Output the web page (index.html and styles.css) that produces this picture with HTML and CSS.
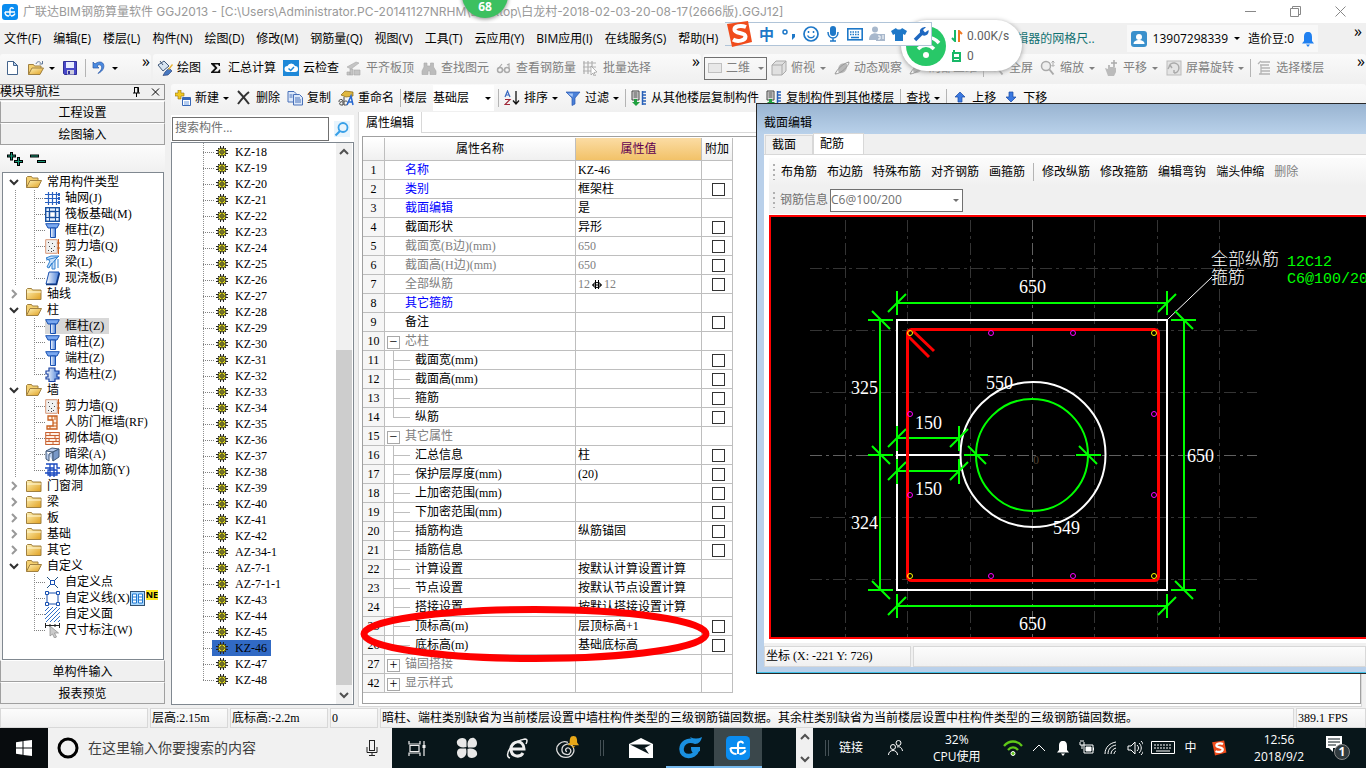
FILE: index.html
```html
<!DOCTYPE html>
<html lang="zh-CN">

<head>
    <meta charset="UTF-8">
    <meta name="viewport" content="width=device-width, initial-scale=1.0">
    <title>广联达BIM钢筋算量软件 GGJ2013</title>
    <link rel="stylesheet" href="styles.css">
</head>

<body>
    <!-- Icon sprite -->
    <svg class="sprite" aria-hidden="true">
        <defs>
            <linearGradient id="gold" x1="0" y1="0" x2="1" y2="1"><stop offset="0" stop-color="#fff3b8"/><stop offset="1" stop-color="#e0a020"/></linearGradient>
            <linearGradient id="blue" x1="0" y1="0" x2="1" y2="0"><stop offset="0" stop-color="#fff"/><stop offset="1" stop-color="#4a80d8"/></linearGradient>
        </defs>
        <symbol id="logo" viewBox="0 0 16 16"><rect width="16" height="16" rx="3" fill="#0a8cf0"/><path d="M8 12V5.500a1.800 1.800 0 0 1 3.500-.5M3 8h10M3 8c0 2.500 1.500 4 4 4M9 12c2 0 3.300-.8 4-2.500" fill="none" stroke="#fff" stroke-width="1.400"/></symbol>
        <symbol id="doc" viewBox="0 0 16 16"><path d="M3.500 1.500h6l4 4v9h-10z" fill="#fff" stroke="#44648c"/><path d="M9.500 1.500v4h4z" fill="#b8d0f0" stroke="#44648c"/></symbol>
        <symbol id="open" viewBox="0 0 16 16"><path d="M.5 13.500v-10l1-1h4l1 1.500h5.500v2.500" fill="#f4d070" stroke="#a08040"/><path d="M.5 13.500 4 6.500h11.500L12 13.500z" fill="url(#gold)" stroke="#a08040"/></symbol>
        <symbol id="load" viewBox="0 0 16 16"><path d="M.5 14.500v-10h5l1 1.500h6.500v2" fill="#f4d070" stroke="#a08040"/><path d="M.5 14.500 4 8h11.500L12 14.500z" fill="url(#gold)" stroke="#a08040"/><path d="M8 4c1-3 4-3 5-.5M14.500 1v3h-3" fill="none" stroke="#607898"/></symbol>
        <symbol id="folder" viewBox="0 0 16 16"><path d="M.5 13.500v-10l1-1h4l1 1.500h8.500v9.500z" fill="url(#gold)" stroke="#a08040"/><path d="M1 6h14" stroke="#fff8d8"/></symbol>
        <symbol id="save" viewBox="0 0 16 16"><path d="M1.500 1.500h13v13h-12l-1-1z" fill="#4848c8" stroke="#303098"/><path d="M4 2h8v6H4z" fill="#e8ecff"/><path d="M5 10h7v4.500H5z" fill="#ccd"/><path d="M6 11h2v3H6z" fill="#303098"/></symbol>
        <symbol id="undo" viewBox="0 0 16 16"><path d="M2 2v6h6L6 6c3-3 6 0 4 4l-3 3.500C15 10 14 2 9 2 7 2 5 3 4 4z" fill="#4a8ae0" stroke="#2858a8" stroke-width=".7"/></symbol>
        <symbol id="paint" viewBox="0 0 16 16"><path d="m1 5 6-4 5 5-6 5z" fill="#d8e4f0" stroke="#405878"/><path d="M3 1l3 4" stroke="#405878"/><path d="m8 12 4-4 3 3-4 4-5 .5z" fill="#4878c0" stroke="#203870" stroke-width=".6"/><path d="m11 9 4-5 1 1-4 5z" fill="#e8b030"/></symbol>
        <symbol id="sigma" viewBox="0 0 16 16"><path d="M3 3h9v3h-1l-1-1.500H6.500L9.500 8l-3.500 3.500h4l1.200-2h1V13H3v-1l4-4-4-4z" fill="#111"/></symbol>
        <symbol id="cloud" viewBox="0 0 16 16"><rect width="16" height="16" fill="#1e88d8"/><path d="M4.500 12a3 3 0 0 1 0-6 4 4 0 0 1 7.500 0 3 3 0 0 1 0 6z" fill="#fff"/><path d="m5.500 8.500 2.200 2L11 7" fill="none" stroke="#1e88d8" stroke-width="1.500"/></symbol>
        <symbol id="align" viewBox="0 0 16 16"><path d="m1 7 9-5 3 1-8 6zM4 9v6h3V9zM8 10h6v5H8zM1 12h3v3H1z" fill="#c4c4c4" stroke="#aaa" stroke-width=".6"/></symbol>
        <symbol id="find" viewBox="0 0 16 16"><path d="M3 3h3v3h3.500V3h3v4l2.500 4v3.500H9V11H7v3.500H1V11l2-4z" fill="#bcbcbc" stroke="#a8a8a8" stroke-width=".6"/></symbol>
        <symbol id="glasses" viewBox="0 0 16 16"><circle cx="4" cy="10" r="2.500" fill="none" stroke="#aaa" stroke-width="1.500"/><circle cx="11" cy="10" r="2.500" fill="none" stroke="#aaa" stroke-width="1.500"/><path d="M2 9l4-5M13 9V4l-2 1M6.500 10h2" fill="none" stroke="#aaa" stroke-width="1.200"/></symbol>
        <symbol id="batch" viewBox="0 0 16 16"><path d="M1 1v13M5 1v13M9 1v7M0 3h13M0 7h13M0 11h8" stroke="#b0b0b0" stroke-width="1.200"/><path d="m8 6 6 6-3 .5 1.500 3-1.500.5-1-3-2 2z" fill="#fff" stroke="#999" stroke-width=".7"/></symbol>
        <symbol id="cube" viewBox="0 0 16 16"><path d="m1 5 4-4h10v10l-4 4H1zM1 5h10v10M11 5l4-4" fill="#e0e0e0" stroke="#aaa"/></symbol>
        <symbol id="orbit" viewBox="0 0 16 16"><path d="M5 13C2 7 7 1 13 4c1 6-3 10-8 9z" fill="#b8b8b8"/><path d="M1 14C3 9 10 3 15 2c0 4-8 12-14 12" fill="none" stroke="#999"/></symbol>
        <symbol id="zoom" viewBox="0 0 16 16"><circle cx="6" cy="6" r="4.500" fill="#eee" stroke="#aaa" stroke-width="1.500"/><path d="m9.500 9.500 4 5" stroke="#aaa" stroke-width="2"/><path d="M13 1v5M11.500 2.500 13 1l1.500 1.500M11.500 5l1.500 1.500L14.500 5" fill="none" stroke="#aaa"/></symbol>
        <symbol id="hand" viewBox="0 0 16 16"><path d="M2 8l3 1V5h2v2h4l2 1v4l-2 4H5z" fill="#bbb"/><path d="M11 0v7M8 3h6" stroke="#aaa" stroke-width="1.500"/></symbol>
        <symbol id="rotate" viewBox="0 0 16 16"><rect x="1" y="1" width="14" height="14" fill="#e4e4e4" stroke="#bbb"/><path d="M3 7a5 5 0 1 1 5 6M2 9l2-4 2 3M8 13v-3" fill="none" stroke="#aaa" stroke-width="1.500"/></symbol>
        <symbol id="floors" viewBox="0 0 16 16"><path d="M5 2h9M4 5h9M5 8h9M5 11h9M3 14h11M5 5v9M2 4l3-3" fill="none" stroke="#b4b4b4" stroke-width="1.300"/></symbol>
        <symbol id="new" viewBox="0 0 16 16"><path d="M3 0h3v3h3v3H6v3H3V6H0V3h3z" fill="#f0c820" stroke="#907010" stroke-width=".6"/><path d="M7.500 7.500h8v8h-8z" fill="#fff" stroke="#3868b8"/><path d="M8 8h7v2H8z" fill="#3868b8"/><path d="M9 12h5M9 14h5" stroke="#6a9ae0"/></symbol>
        <symbol id="del" viewBox="0 0 16 16"><path d="M2 1c3 3 8 9 11 13M13 2C9 5 5 10 2 14" fill="none" stroke="#333" stroke-width="2"/></symbol>
        <symbol id="copy" viewBox="0 0 16 16"><path d="M1 1.500h6l2 2V12H1z" fill="#dce8fa" stroke="#4870b8"/><path d="M6.500 4.500h6l3 3v7.500h-9z" fill="#dce8fa" stroke="#4870b8"/><path d="M2.500 5h3M2.500 7h3M8 8h5M8 10h6M8 12h6" stroke="#4870b8"/></symbol>
        <symbol id="rename" viewBox="0 0 16 16"><path d="m3 5 4-4 8 1v4l-7 1z" fill="#e0b840" stroke="#806010" stroke-width=".7"/><path d="M1 12a2 2 0 1 1 4-1v4H2.500a1.500 1.500 0 1 1 2-3M6 7v8h1.500a2 2 0 1 0-1-3.500" fill="none" stroke="#444"/><path d="m9 15 4-9 2 9M10 12h4" fill="none" stroke="#2868d0" stroke-width="1.500"/></symbol>
        <symbol id="sort" viewBox="0 0 16 16"><path d="m1 7 2.500-6L6 7M2 5h3" fill="none" stroke="#3868c0" stroke-width="1.200"/><path d="M1 9.500h5l-5 5h5" fill="none" stroke="#a02838" stroke-width="1.200"/><path d="M12 1v12M9 10.500l3 3.500 3-3.500" fill="none" stroke="#111" stroke-width="1.300"/></symbol>
        <symbol id="funnel" viewBox="0 0 16 16"><path d="M1 2h14l-5 6v6l-3 1.500V8z" fill="#4a80d8" stroke="#2858b0" stroke-width=".7"/><path d="M3 3.500h5L7.500 7z" fill="#a8c8f8"/></symbol>
        <symbol id="floorcopy" viewBox="0 0 16 16"><path d="M1 1h7v9H1z" fill="#ddd" stroke="#444"/><path d="M2.500 3h4M2.500 5h4M2.500 7h4" stroke="#444"/><path d="M11 2h4M11 5h4M11 8h4M11 11h4M11 14h4M11.500 1v14" fill="none" stroke="#2860b8" stroke-width="1.500"/><path d="M3 9v3H1l4 4 4-4H6V9z" fill="#20a040"/></symbol>
        <symbol id="up" viewBox="0 0 16 16"><path d="m8 2 5 5h-3v5H6V7H3z" fill="#3a78e0" stroke="#1848a0" stroke-width=".7"/></symbol>
        <symbol id="down" viewBox="0 0 16 16"><path d="m8 12 5-5h-3V2H6v5H3z" fill="#3a78e0" stroke="#1848a0" stroke-width=".7"/></symbol>
        <symbol id="search" viewBox="0 0 16 16"><circle cx="9" cy="6.500" r="4.500" fill="none" stroke="#38a0e8" stroke-width="1.800"/><path d="m6 10-4.500 4.500" stroke="#38a0e8" stroke-width="2.200"/></symbol>
        <symbol id="gear" viewBox="0 0 12 12"><path d="M4.500 0v12M7.500 0v12M0 4.500h12M0 7.500h12M2 2l8 8M10 2l-8 8" stroke="#222"/><circle cx="6" cy="6" r="4" fill="#f4ee10" stroke="#222" stroke-width=".8"/><circle cx="6" cy="6" r="2" fill="#f4ee10" stroke="#333" stroke-width=".8"/><path d="M6 2v8M2 6h8" stroke="#333" stroke-width=".8"/></symbol>
        <symbol id="axis" viewBox="0 0 15 15"><path d="M3.500 1v13M7.500 1v13M11.500 1v13M0 3.500h13M0 7.500h13M0 11.500h13" stroke="#2860c0" stroke-width="1.200"/><path d="M13 2h2v3h-2zM13 6h2v3h-2zM13 10h2v3h-2z" fill="#2860c0"/></symbol>
        <symbol id="raft" viewBox="0 0 15 15"><rect x=".7" y=".7" width="13.600" height="13.600" fill="#e4f0ff" stroke="#1850a0" stroke-width="1.400"/><path d="M4.500 1v13M10.500 1v13M1 4.500h13M1 10.500h13" stroke="#1850a0"/><rect x="4.500" y="4.500" width="6" height="6" fill="#fff" stroke="#1850a0" stroke-width="1.500"/></symbol>
        <symbol id="column" viewBox="0 0 15 15"><path d="M.7.700h13.600L12 5H3z" fill="#7aa8f0" stroke="#1850b0"/><path d="M5.500 5h5v9.500h-5z" fill="url(#blue)" stroke="#1850b0"/></symbol>
        <symbol id="shear" viewBox="0 0 15 15"><path d="M.7.700h11.600v13.600H.7z" fill="#f0f0f0" stroke="#d89878"/><path d="M13.500 0v15M12 4h3M12 9h3" stroke="#c86020"/><path d="M3 3h1v1H3zM7 4h1v1H7zM4 7h1v1H4zM9 7h1v1H9zM6 9h1v1H6zM3 11h1v1H3zM8 11h1v1H8zM6 12h1v1H6z" fill="#444"/></symbol>
        <symbol id="beam" viewBox="0 0 15 15"><path d="m1 3 5-2h8l-4 4v9H7V8L4 13l-2-1 3-6z" fill="#c8e0fa" stroke="#3080d0"/><path d="m1 5 12-3M4 12l8-9M13 4v9" stroke="#3080d0"/></symbol>
        <symbol id="slab" viewBox="0 0 15 15"><path d="M4 1h10l-3 12H1z" fill="url(#blue)" stroke="#1850b0"/><path d="M1 13.500h10.500L14.500 2" fill="none" stroke="#103880" stroke-width="1.500"/></symbol>
        <symbol id="struct" viewBox="0 0 15 15"><path d="M4 1h6v3h4v3h-2v3h2v2h-4v2.500H4V12H1v-2h2V7H1V4h3z" fill="url(#blue)" stroke="#1840a0" stroke-width="1.200"/></symbol>
        <symbol id="guard" viewBox="0 0 15 15"><path d="M3 1h9v13H2v-3h6V5H3z" fill="#fff0e0" stroke="#c86020" stroke-width="1.300"/><path d="M8 8h4M5 11v3M8 11h4M7 1v4M10 1v4" stroke="#c86020"/></symbol>
        <symbol id="brick" viewBox="0 0 15 15"><rect x=".7" y="1.500" width="13.600" height="12" fill="#fff0e4" stroke="#c86030"/><path d="M1 4.500h13M1 7.500h13M1 10.500h13M5 1.500v3M10 4.500v3M4 7.500v3M8 10.500v3M11 8v2" stroke="#c86030"/></symbol>
        <symbol id="hbeam" viewBox="0 0 15 15"><path d="m1 4 6-3 7 1-6 3zM1 4v8l3 2V7l4-2v9" fill="#b8ccec" stroke="#405878"/><path d="m8 5 6-3v8l-6 4z" fill="#7898c8" stroke="#405878"/></symbol>
        <symbol id="rebar" viewBox="0 0 15 15"><path d="M1 1h11v4h3M0 5h9V1M0 10h15M5 1v13M9 5v9M3 7h9v5H3z" fill="none" stroke="#1848c0" stroke-width="1.300"/></symbol>
        <symbol id="point" viewBox="0 0 15 15"><path d="M2 2l11 11M13 2 2 13" stroke="#205080"/><rect x="5.500" y="5.500" width="4" height="4" fill="#fff" stroke="#1850b0"/></symbol>
        <symbol id="line" viewBox="0 0 15 15"><rect x="2" y="2" width="11" height="11" fill="none" stroke="#1850b0"/><path d="M.5.500h3v3h-3zM11.500.500h3v3h-3zM.5 11.500h3v3h-3zM11.500 11.500h3v3h-3z" fill="#fff" stroke="#1850b0"/></symbol>
        <symbol id="hatch" viewBox="0 0 15 15"><path d="M0 4l4-4M0 8l8-8M0 12 12 0M1 15 15 1M5 15 15 5M9 15l6-6M13 15l2-2" stroke="#3070c8"/></symbol>
        <symbol id="dim" viewBox="0 0 15 15"><path d="M.5 0v5M14.500 0v5M1 2.500h13M5 1v3M10 1v3" stroke="#222"/><path d="M5 3v10l2.500-2 2 4 2-1-2-4h4z" fill="#ccc" stroke="#888" stroke-width=".7"/></symbol>
        <symbol id="chev" viewBox="0 0 10 10"><path d="m1 3 4 4 4-4" fill="none" stroke="currentColor" stroke-width="2"/></symbol>
        <symbol id="bell" viewBox="0 0 14 16"><path d="M7 1c3 0 4 2 4 5v4l2 2.500H1L3 10V6c0-3 1-5 4-5zM5 13.500h4L7 16z" fill="currentColor"/></symbol>
        <symbol id="sogou" viewBox="0 0 28 28"><path d="m2 4 21-3 4 21-20 5z" fill="#f04c1c"/><path d="M21 7C16 5 9 6 9.500 10s11 2 11 6.500S12 22 8 19.500" fill="none" stroke="#fff" stroke-width="4"/></symbol>
    </svg>

    <div class="window">
        <header class="title-bar">
            <svg class="icon"><use href="#logo"/></svg>
            <h1>广联达BIM钢筋算量软件 GGJ2013 - [C:\Users\Administrator.PC-20141127NRHM\Desktop\白龙村-2018-02-03-20-08-17(2666版).GGJ12]</h1>
            <div class="window-buttons">
                <button aria-label="最小化"><svg viewBox="0 0 11 11"><path d="M0 5.500h11"/></svg></button>
                <button aria-label="还原"><svg viewBox="0 0 11 11"><path d="M.5 2.500h8v8h-8zM2.500 2.500v-2h8v8h-2"/></svg></button>
                <button aria-label="关闭"><svg viewBox="0 0 11 11"><path d="m.5.500 10 10M10.500.500l-10 10"/></svg></button>
            </div>
        </header>

        <nav class="menu-bar">
            <button>文件(F)</button><button>编辑(E)</button><button>楼层(L)</button><button>构件(N)</button><button>绘图(D)</button><button>修改(M)</button><button>钢筋量(Q)</button><button>视图(V)</button><button>工具(T)</button><button>云应用(Y)</button><button>BIM应用(I)</button><button>在线服务(S)</button><button>帮助(H)</button>
            <a class="hint" href="#">编辑器的网格尺..</a>
            <div class="account">
                <svg class="icon" viewBox="0 0 16 16"><rect width="16" height="16" rx="3" fill="#3a90cc"/><circle cx="8" cy="6" r="3" fill="#fff"/><path d="M2.500 13c0-3 3-4 5.500-4s5.500 1 5.500 4z" fill="#fff"/></svg>
                <button>13907298339<i class="arrow"></i></button>
                <span>造价豆:0</span>
                <svg class="icon bell"><use href="#bell"/></svg>
            </div>
            <button class="more">»</button>
        </nav>

        <div class="toolbar-row">
            <div class="toolbar file-tools">
                <button aria-label="新建工程"><svg class="icon"><use href="#doc"/></svg></button>
                <button aria-label="打开"><svg class="icon"><use href="#load"/></svg><i class="arrow"></i></button>
                <button aria-label="保存"><svg class="icon"><use href="#save"/></svg></button>
                <i class="sep"></i>
                <button aria-label="撤销"><svg class="icon"><use href="#undo"/></svg><i class="arrow"></i></button>
                <button class="more">»</button>
            </div>
            <div class="toolbar draw-tools">
                <button><svg class="icon"><use href="#paint"/></svg>绘图</button>
                <button><svg class="icon"><use href="#sigma"/></svg>汇总计算</button>
                <button><svg class="icon"><use href="#cloud"/></svg>云检查</button>
                <button disabled><svg class="icon"><use href="#align"/></svg>平齐板顶</button>
                <button disabled><svg class="icon"><use href="#find"/></svg>查找图元</button>
                <button disabled><svg class="icon"><use href="#glasses"/></svg>查看钢筋量</button>
                <button disabled><svg class="icon"><use href="#batch"/></svg>批量选择</button>
                <button class="more">»</button>
            </div>
            <div class="toolbar view-tools">
                <button class="boxed" disabled><i class="swatch"></i>二维<i class="arrow"></i></button>
                <button disabled><svg class="icon"><use href="#cube"/></svg>俯视<i class="arrow wide"></i></button>
                <button disabled><svg class="icon"><use href="#orbit"/></svg>动态观察</button>
                <button disabled><svg class="icon"><use href="#orbit"/></svg>局部三维</button>
                <i class="sep"></i>
                <button disabled><svg class="icon"><use href="#zoom"/></svg>全屏</button>
                <button disabled><svg class="icon"><use href="#zoom"/></svg>缩放<i class="arrow wide"></i></button>
                <button disabled><svg class="icon"><use href="#hand"/></svg>平移<i class="arrow wide"></i></button>
                <button disabled><svg class="icon"><use href="#rotate"/></svg>屏幕旋转<i class="arrow"></i></button>
                <i class="sep"></i>
                <button disabled><svg class="icon"><use href="#floors"/></svg>选择楼层</button>
                <button class="more">»</button>
            </div>
        </div>

        <div class="main">
            <aside class="nav-panel">
                <div class="panel-title"><span>模块导航栏</span>
                    <button aria-label="固定"><svg viewBox="0 0 9 10"><path d="M2.500.500h4v5M1 6h7M2.500 0v6M5.800 0v6M4.500 6v4" fill="none" stroke="#000"/></svg></button>
                    <button aria-label="关闭"><svg viewBox="0 0 9 10"><path d="m1 1.500 7 7M8 1.500l-7 7" stroke="#000"/></svg></button>
                </div>
                <button class="module">工程设置</button>
                <button class="module">绘图输入</button>
                <div class="expand-bar">
                    <button aria-label="全部展开"><svg viewBox="0 0 16 14"><path d="M0 4h9M4.500 0v8.500M7 9.500h9M11.500 5v9" stroke="#000" stroke-width="3"/><path d="M1 4h7M4.500 1v6.500M8 9.500h7M11.500 6v7" stroke="#189878"/></svg></button>
                    <button aria-label="全部折叠"><svg viewBox="0 0 16 14"><path d="M0 4h9M7 9.500h9" stroke="#000" stroke-width="3"/><path d="M1 4h7M8 9.500h7" stroke="#189878"/></svg></button>
                </div>
                <ul class="tree">
                    <li class="open"><div class="node"><svg class="chev"><use href="#chev"/></svg><svg class="icon"><use href="#open"/></svg>常用构件类型</div>
                        <ul>
                            <li><svg><use href="#axis"/></svg><span>轴网(J)</span></li>
                            <li><svg><use href="#raft"/></svg><span>筏板基础(M)</span></li>
                            <li><svg><use href="#column"/></svg><span>框柱(Z)</span></li>
                            <li><svg><use href="#shear"/></svg><span>剪力墙(Q)</span></li>
                            <li><svg><use href="#beam"/></svg><span>梁(L)</span></li>
                            <li><svg><use href="#slab"/></svg><span>现浇板(B)</span></li>
                        </ul>
                    </li>
                    <li><div class="node"><svg class="chev"><use href="#chev"/></svg><svg class="icon"><use href="#folder"/></svg>轴线</div></li>
                    <li class="open"><div class="node"><svg class="chev"><use href="#chev"/></svg><svg class="icon"><use href="#open"/></svg>柱</div>
                        <ul>
                            <li class="current"><svg><use href="#column"/></svg><span>框柱(Z)</span></li>
                            <li><svg><use href="#column"/></svg><span>暗柱(Z)</span></li>
                            <li><svg><use href="#column"/></svg><span>端柱(Z)</span></li>
                            <li><svg><use href="#struct"/></svg><span>构造柱(Z)</span></li>
                        </ul>
                    </li>
                    <li class="open"><div class="node"><svg class="chev"><use href="#chev"/></svg><svg class="icon"><use href="#open"/></svg>墙</div>
                        <ul>
                            <li><svg><use href="#shear"/></svg><span>剪力墙(Q)</span></li>
                            <li><svg><use href="#guard"/></svg><span>人防门框墙(RF)</span></li>
                            <li><svg><use href="#brick"/></svg><span>砌体墙(Q)</span></li>
                            <li><svg><use href="#hbeam"/></svg><span>暗梁(A)</span></li>
                            <li><svg><use href="#rebar"/></svg><span>砌体加筋(Y)</span></li>
                        </ul>
                    </li>
                    <li><div class="node"><svg class="chev"><use href="#chev"/></svg><svg class="icon"><use href="#folder"/></svg>门窗洞</div></li>
                    <li><div class="node"><svg class="chev"><use href="#chev"/></svg><svg class="icon"><use href="#folder"/></svg>梁</div></li>
                    <li><div class="node"><svg class="chev"><use href="#chev"/></svg><svg class="icon"><use href="#folder"/></svg>板</div></li>
                    <li><div class="node"><svg class="chev"><use href="#chev"/></svg><svg class="icon"><use href="#folder"/></svg>基础</div></li>
                    <li><div class="node"><svg class="chev"><use href="#chev"/></svg><svg class="icon"><use href="#folder"/></svg>其它</div></li>
                    <li class="open last"><div class="node"><svg class="chev"><use href="#chev"/></svg><svg class="icon"><use href="#open"/></svg>自定义</div>
                        <ul>
                            <li><svg><use href="#point"/></svg><span>自定义点</span></li>
                            <li><svg><use href="#line"/></svg><span>自定义线(X)</span><svg class="book" viewBox="0 0 15 15"><rect x=".5" y=".5" width="14" height="14" fill="#a8d8ff" stroke="#305070"/><path d="M2.500 3h4v9h-4zM8.500 3h4v9h-4zM3 6h3M3 9h3M9 6h3M9 9h3" fill="#fff" stroke="#2078d0"/></svg><b class="new">NE</b></li>
                            <li><svg><use href="#hatch"/></svg><span>自定义面</span></li>
                            <li><svg><use href="#dim"/></svg><span>尺寸标注(W)</span></li>
                        </ul>
                    </li>
                </ul>
                <button class="module">单构件输入</button>
                <button class="module">报表预览</button>
            </aside>

            <div class="workspace">
                <div class="toolbar edit-tools">
                    <button><svg class="icon"><use href="#new"/></svg>新建<i class="arrow"></i></button>
                    <button><svg class="icon"><use href="#del"/></svg>删除</button>
                    <button><svg class="icon"><use href="#copy"/></svg>复制</button>
                    <button><svg class="icon"><use href="#rename"/></svg>重命名</button>
                    <i class="sep"></i>
                    <label for="floor">楼层</label>
                    <span class="combo floor"><select id="floor"><option>基础层</option></select></span>
                    <i class="sep"></i>
                    <button><svg class="icon"><use href="#sort"/></svg>排序<i class="arrow"></i></button>
                    <button><svg class="icon"><use href="#funnel"/></svg>过滤<i class="arrow"></i></button>
                    <i class="sep"></i>
                    <button><svg class="icon"><use href="#floorcopy"/></svg>从其他楼层复制构件</button>
                    <button><svg class="icon"><use href="#floorcopy"/></svg>复制构件到其他楼层</button>
                    <i class="sep"></i>
                    <button>查找<i class="arrow"></i></button>
                    <i class="sep"></i>
                    <button><svg class="icon"><use href="#up"/></svg>上移</button>
                    <button><svg class="icon"><use href="#down"/></svg>下移</button>
                </div>

                <div class="panes">
                    <section class="members">
                        <div class="search">
                            <input type="text" placeholder="搜索构件..." aria-label="搜索构件">
                            <button aria-label="搜索"><svg class="icon"><use href="#search"/></svg></button>
                        </div>
                        <div class="list-box">
                            <ul class="list">
                                <li><svg><use href="#gear"/></svg>KZ-18</li>
                                <li><svg><use href="#gear"/></svg>KZ-19</li>
                                <li><svg><use href="#gear"/></svg>KZ-20</li>
                                <li><svg><use href="#gear"/></svg>KZ-21</li>
                                <li><svg><use href="#gear"/></svg>KZ-22</li>
                                <li><svg><use href="#gear"/></svg>KZ-23</li>
                                <li><svg><use href="#gear"/></svg>KZ-24</li>
                                <li><svg><use href="#gear"/></svg>KZ-25</li>
                                <li><svg><use href="#gear"/></svg>KZ-26</li>
                                <li><svg><use href="#gear"/></svg>KZ-27</li>
                                <li><svg><use href="#gear"/></svg>KZ-28</li>
                                <li><svg><use href="#gear"/></svg>KZ-29</li>
                                <li><svg><use href="#gear"/></svg>KZ-30</li>
                                <li><svg><use href="#gear"/></svg>KZ-31</li>
                                <li><svg><use href="#gear"/></svg>KZ-32</li>
                                <li><svg><use href="#gear"/></svg>KZ-33</li>
                                <li><svg><use href="#gear"/></svg>KZ-34</li>
                                <li><svg><use href="#gear"/></svg>KZ-35</li>
                                <li><svg><use href="#gear"/></svg>KZ-36</li>
                                <li><svg><use href="#gear"/></svg>KZ-37</li>
                                <li><svg><use href="#gear"/></svg>KZ-38</li>
                                <li><svg><use href="#gear"/></svg>KZ-39</li>
                                <li><svg><use href="#gear"/></svg>KZ-40</li>
                                <li><svg><use href="#gear"/></svg>KZ-41</li>
                                <li><svg><use href="#gear"/></svg>KZ-42</li>
                                <li><svg><use href="#gear"/></svg>AZ-34-1</li>
                                <li><svg><use href="#gear"/></svg>AZ-7-1</li>
                                <li><svg><use href="#gear"/></svg>AZ-7-1-1</li>
                                <li><svg><use href="#gear"/></svg>KZ-43</li>
                                <li><svg><use href="#gear"/></svg>KZ-44</li>
                                <li><svg><use href="#gear"/></svg>KZ-45</li>
                                <li class="selected"><span><svg><use href="#gear"/></svg>KZ-46</span></li>
                                <li><svg><use href="#gear"/></svg>KZ-47</li>
                                <li><svg><use href="#gear"/></svg>KZ-48</li>
                            </ul>
                            <div class="scrollbar">
                                <svg class="chev up"><use href="#chev"/></svg>
                                <div class="track"><div class="thumb"></div></div>
                                <svg class="chev"><use href="#chev"/></svg>
                            </div>
                        </div>
                    </section>

                    <section class="properties">
                        <div class="tabs"><button class="active">属性编辑</button></div>
                        <div class="grid-box">
                            <table class="grid">
                                <thead>
                                    <tr><th class="no"></th><th class="name">属性名称</th><th class="value">属性值</th><th class="extra">附加</th></tr>
                                </thead>
                                <tbody>
                                    <tr><th>1</th><td class="key">名称</td><td>KZ-46</td><td></td></tr>
                                    <tr><th>2</th><td class="key">类别</td><td>框架柱</td><td><input type="checkbox" aria-label="类别"></td></tr>
                                    <tr><th>3</th><td class="key">截面编辑</td><td>是</td><td></td></tr>
                                    <tr><th>4</th><td>截面形状</td><td>异形</td><td><input type="checkbox" aria-label="截面形状"></td></tr>
                                    <tr class="locked"><th>5</th><td>截面宽(B边)(mm)</td><td>650</td><td><input type="checkbox" aria-label="截面宽"></td></tr>
                                    <tr class="locked"><th>6</th><td>截面高(H边)(mm)</td><td>650</td><td><input type="checkbox" aria-label="截面高"></td></tr>
                                    <tr class="locked"><th>7</th><td>全部纵筋</td><td>12<svg class="grade" viewBox="0 0 12 10"><ellipse cx="6" cy="5" rx="4" ry="2.500" fill="none" stroke="#000"/><path d="M4.500 0v9M7.500 0v9M1 5h10" stroke="#000"/></svg>12</td><td><input type="checkbox" aria-label="全部纵筋"></td></tr>
                                    <tr><th>8</th><td class="key">其它箍筋</td><td></td><td></td></tr>
                                    <tr><th>9</th><td>备注</td><td></td><td><input type="checkbox" aria-label="备注"></td></tr>
                                    <tr class="group"><th>10</th><td><button class="toggle">−</button>芯柱</td><td></td><td></td></tr>
                                    <tr class="child"><th>11</th><td>截面宽(mm)</td><td></td><td><input type="checkbox" aria-label="芯柱截面宽"></td></tr>
                                    <tr class="child"><th>12</th><td>截面高(mm)</td><td></td><td><input type="checkbox" aria-label="芯柱截面高"></td></tr>
                                    <tr class="child"><th>13</th><td>箍筋</td><td></td><td><input type="checkbox" aria-label="箍筋"></td></tr>
                                    <tr class="child end"><th>14</th><td>纵筋</td><td></td><td><input type="checkbox" aria-label="纵筋"></td></tr>
                                    <tr class="group"><th>15</th><td><button class="toggle">−</button>其它属性</td><td></td><td></td></tr>
                                    <tr class="child"><th>16</th><td>汇总信息</td><td>柱</td><td><input type="checkbox" aria-label="汇总信息"></td></tr>
                                    <tr class="child"><th>17</th><td>保护层厚度(mm)</td><td>(20)</td><td><input type="checkbox" aria-label="保护层厚度"></td></tr>
                                    <tr class="child"><th>18</th><td>上加密范围(mm)</td><td></td><td><input type="checkbox" aria-label="上加密范围"></td></tr>
                                    <tr class="child"><th>19</th><td>下加密范围(mm)</td><td></td><td><input type="checkbox" aria-label="下加密范围"></td></tr>
                                    <tr class="child"><th>20</th><td>插筋构造</td><td>纵筋锚固</td><td><input type="checkbox" aria-label="插筋构造"></td></tr>
                                    <tr class="child"><th>21</th><td>插筋信息</td><td></td><td><input type="checkbox" aria-label="插筋信息"></td></tr>
                                    <tr class="child"><th>22</th><td>计算设置</td><td>按默认计算设置计算</td><td></td></tr>
                                    <tr class="child"><th>23</th><td>节点设置</td><td>按默认节点设置计算</td><td></td></tr>
                                    <tr class="child"><th>24</th><td>搭接设置</td><td>按默认搭接设置计算</td><td></td></tr>
                                    <tr class="child"><th>25</th><td>顶标高(m)</td><td>层顶标高+1</td><td><input type="checkbox" aria-label="顶标高"></td></tr>
                                    <tr class="child end"><th>26</th><td>底标高(m)</td><td>基础底标高</td><td><input type="checkbox" aria-label="底标高"></td></tr>
                                    <tr class="group"><th>27</th><td><button class="toggle">+</button>锚固搭接</td><td></td><td></td></tr>
                                    <tr class="group"><th>42</th><td><button class="toggle">+</button>显示样式</td><td></td><td></td></tr>
                                </tbody>
                            </table>
                        </div>
                    </section>
                </div>
            </div>
        </div>

        <footer class="status-bar">
            <span class="blank"></span><span class="height">层高:2.15m</span><span class="base">底标高:-2.2m</span><span class="count">0</span><span class="message">暗柱、端柱类别缺省为当前楼层设置中墙柱构件类型的三级钢筋锚固数据。其余柱类别缺省为当前楼层设置中柱构件类型的三级钢筋锚固数据。</span><span class="fps">389.1 FPS</span>
        </footer>
    </div>

    <!-- Section editor window -->
    <section class="dialog">
        <h2>截面编辑</h2>
        <div class="dialog-body">
            <div class="dialog-tabs"><button>截面</button><button class="active">配筋</button></div>
            <div class="dialog-tools">
                <i class="grip"></i>
                <button>布角筋</button><button>布边筋</button><button>特殊布筋</button><button>对齐钢筋</button><button>画箍筋</button><i class="sep"></i><button>修改纵筋</button><button>修改箍筋</button><button>编辑弯钩</button><button>端头伸缩</button><button disabled>删除</button>
            </div>
            <div class="dialog-tools info">
                <i class="grip"></i>
                <label for="bar-info">钢筋信息</label>
                <span class="combo bar"><select id="bar-info" disabled><option>C6@100/200</option></select></span>
            </div>
            <div class="canvas">
                <svg viewBox="771 217 595 420" preserveAspectRatio="xMinYMin slice">
                    <g class="axis-lines">
                        <path d="M845.500 220v417M907.500 220v417M970.500 220v417M1094.500 220v417M1157.500 220v417M1219.500 220v417"/>
                        <path d="M810 268.500h447M810 330.500h447M810 392.500h447M810 517.500h447M810 579.500h447"/>
                        <path class="center" d="M1032.500 220v417M810 455.500h447"/>
                    </g>
                    <text x="1033" y="464" class="origin">0</text>
                    <path class="white thin" d="M1168 319l44-42"/>
                    <rect class="white" x="897" y="320" width="270" height="270"/>
                    <circle class="white" cx="1033" cy="454.500" r="72.500"/>
                    <path class="white" d="M897 455h63"/>
                    <circle class="green" cx="1032" cy="455" r="56"/>
                    <g class="green">
                        <path d="M897 303h270M897 291v24M1167 291v24M888 312l18-18M1158 312l18-18"/>
                        <path d="M897 606h270M897 594v24M1167 594v24M888 615l18-18M1158 615l18-18"/>
                        <path d="M880 320v270M868 320h25M868 455h25M868 590h25M872 311l18 18M872 446l18 18M872 581l18 18"/>
                        <path d="M1184 320v270M1171 320h25M1171 590h25M1175 311l18 18M1175 581l18 18"/>
                        <path d="M897 438h62M897 426v25M959 426v25M888 447l18-18M950 447l18-18"/>
                        <path d="M897 471h62M897 459v25M959 459v25M888 480l18-18M950 480l18-18"/>
                        <path d="M964 455h24M968 446l18 18M1076 455h25M1079 446l18 18"/>
                    </g>
                    <rect class="red" x="907.500" y="329.500" width="251" height="251" rx="4"/>
                    <path class="red" d="M908 336l21 21M913 331l21 20"/>
                    <g class="bars">
                        <circle cx="991" cy="333" r="2.500"/><circle cx="1073" cy="333" r="2.500"/><circle cx="991" cy="576" r="2.500"/><circle cx="1073" cy="576" r="2.500"/>
                        <circle cx="910" cy="414" r="2.500"/><circle cx="910" cy="495" r="2.500"/><circle cx="1154" cy="414" r="2.500"/><circle cx="1154" cy="495" r="2.500"/>
                    </g>
                    <g class="bars corner">
                        <circle cx="910" cy="333" r="2.500"/><circle cx="1154" cy="333" r="2.500"/><circle cx="910" cy="576" r="2.500"/><circle cx="1154" cy="576" r="2.500"/>
                    </g>
                    <g class="labels">
                        <text x="1019" y="293">650</text><text x="1019" y="630">650</text><text x="1187" y="462">650</text>
                        <text x="851" y="394">325</text><text x="851" y="529">324</text>
                        <text x="915" y="429">150</text><text x="915" y="495">150</text>
                        <text x="986" y="389">550</text><text x="1053" y="534">549</text>
                        <text x="1211" y="265" class="cjk">全部纵筋</text><text x="1211" y="283" class="cjk">箍筋</text>
                        <text x="1287" y="266" class="bar-text">12C12</text><text x="1287" y="283" class="bar-text">C6@100/200</text>
                    </g>
                </svg>
            </div>
            <div class="dialog-status"><span>坐标 (X: -221 Y: 726)</span><span></span></div>
        </div>
    </section>

    <!-- Pen mark round the elevation rows -->
    <svg class="pen-mark" viewBox="0 0 350 56"><ellipse cx="175" cy="28" rx="171" ry="24.500"/></svg>

    <!-- Floating desktop widgets -->
    <div class="score-ball">68</div>
    <div class="net-pill">
        <svg class="wifi" viewBox="0 0 40 40"><circle cx="20" cy="20" r="20" fill="#28c868"/><path d="M7 17c7-8 19-8 26 0M12 23c5-5 11-5 16 0" fill="none" stroke="#fff" stroke-width="3.500"/><circle cx="20" cy="29" r="3" fill="#fff"/></svg>
        <div class="readings">
            <div><svg viewBox="0 0 12 12"><path d="M4 0v11L1 8" fill="none" stroke="#18b868" stroke-width="2"/><path d="M8 12V1l3 3" fill="none" stroke="#f07820" stroke-width="2"/></svg>0.00K/s</div>
            <div><svg viewBox="0 0 12 12"><path d="M2 3h7v8H2zM2 8h7M3 0v3" fill="none" stroke="#18b868" stroke-width="2"/></svg>0</div>
        </div>
    </div>
    <div class="ime-bar">
        <svg class="ime-logo"><use href="#sogou"/></svg>
        <b>中</b>
        <svg viewBox="0 0 16 16"><circle cx="4" cy="6" r="2" fill="none" stroke="#1e78c8" stroke-width="1.500"/><path d="M11 8h3v3l-3 3z" fill="#1e78c8"/></svg>
        <svg viewBox="0 0 16 16"><circle cx="8" cy="8" r="7" fill="none" stroke="#1e78c8" stroke-width="1.700"/><path d="M5.500 5v2M10.500 5v2M4.500 9.500c1.500 3 5.500 3 7 0" fill="none" stroke="#1e78c8" stroke-width="1.500"/></svg>
        <svg viewBox="0 0 16 16"><rect x="5" y="0" width="6" height="10" rx="3" fill="#1e78c8"/><path d="M3 6c0 8 10 8 10 0M8 12v3M5 15h6" fill="none" stroke="#1e78c8" stroke-width="1.500"/></svg>
        <svg viewBox="0 0 16 16"><rect x=".8" y="2.800" width="14.400" height="11" fill="none" stroke="#1e78c8" stroke-width="1.600"/><path d="M3 6h10M3 8.500h10" stroke="#1e78c8" stroke-width="1.500" stroke-dasharray="1.500 1"/><path d="M4 11.500h8" stroke="#1e78c8" stroke-width="1.500"/></svg>
        <svg viewBox="0 0 16 16"><circle cx="6" cy="3.500" r="3" fill="#a8b8cc"/><path d="M0 14c0-8 9-8 11-4v4zM7 8h9v7H7z" fill="#a8b8cc"/><path d="M9 10h2v3H9M13 10h2M13 12h2" fill="none" stroke="#fff"/></svg>
        <svg viewBox="0 0 16 16"><path d="M5 2c1 2 5 2 6 0l5 3-2 4-2-1v7H4V8L2 9 0 5z" fill="#1e78c8"/></svg>
        <svg viewBox="0 0 16 16"><path d="m2 14 7-7" stroke="#1e68c0" stroke-width="3.500"/><path d="M13 1 10 4l2 2.500L15.500 4c1 4-3 7-6.500 5S6 1 13 1z" fill="#1e68c0"/></svg>
    </div>

    <div class="taskbar">
        <button class="start" aria-label="开始"><svg viewBox="0 0 16 16"><path d="M0 2.300 6.500 1.300v6.200H0zM7.500 1.100 16 0v7.500H7.500zM0 8.500h6.500v6.200L0 13.700zM7.500 8.500H16V16l-8.500-1.100z" fill="#fff"/></svg></button>
        <div class="task-search">
            <svg class="ring" viewBox="0 0 22 22"><circle cx="11" cy="11" r="9" fill="none" stroke="#000" stroke-width="3"/></svg>
            <input type="text" placeholder="在这里输入你要搜索的内容" aria-label="搜索">
            <svg class="mic" viewBox="0 0 12 16"><rect x="3.500" y=".5" width="5" height="10" fill="none" stroke="#222"/><path d="M1 7v5.500h10V7M6 12v3.500M3 15.500h6" fill="none" stroke="#222"/></svg>
        </div>
        <div class="apps">
            <button aria-label="任务视图"><svg viewBox="0 0 24 24"><path d="M4 5v3h11V5M4 20v-3h11v3M5 9.500h9v6H5zM19 5v15" fill="none" stroke="#eee" stroke-width="1.200"/><path d="M17.500 9h3v3h-3z" fill="#eee"/></svg></button>
            <button aria-label="风扇"><svg viewBox="0 0 24 24"><path d="M11.500 11C4 13 1 8 2 5c2-4 9-4 9.500 0zM13 11.500C11 4 16 1 19 2c4 2 4 9 0 9.500zM12.500 13C20 11 23 16 22 19c-2 4-9 4-9.500 0zM11 12.500C13 20 8 23 5 22c-4-2-4-9 0-9.500z" fill="#e8e8e8"/></svg></button>
            <button aria-label="浏览器"><svg viewBox="0 0 24 24"><path d="M6 13h13c0-10-13-9-13 0 0 8 9 9 12 4" fill="none" stroke="#eee" stroke-width="3"/><path d="M5 22C-2 20 7 5 20 3c3 0 2 3 1 5" fill="none" stroke="#eee" stroke-width="1.500"/></svg></button>
            <button aria-label="助手"><svg viewBox="0 0 26 26"><path d="M14 7C7 4-1 11 3 18c4 7 14 7 17 0 2-6-3-11-8-9-6 2-6 10 0 11 5 1 7-5 3-7-3-1-5 3-2 4" fill="none" stroke="#ddd" stroke-width="1.400"/><path d="M20 0c4 0 4 4 4 7l2 3H14l2-3c0-3 0-7 4-7zM18 11h4l-2 2z" fill="#e8a818"/></svg></button>
            <i class="divider"></i>
            <button aria-label="邮件"><svg viewBox="0 0 24 24"><path d="M0 8l12-6 12 6v14H0z" fill="#fff"/><path d="M1 8.500h21L12 14zM12 14l8 4-4-6z" fill="#08161a"/></svg></button>
            <button class="running" aria-label="广联达G"><svg viewBox="0 0 24 24"><path d="M18 6C9 2 3.500 8 3.500 13c0 9 13 9.500 15.500 1" fill="none" stroke="#1a90e0" stroke-width="4.500"/><path d="M12 1c4 2 8 2 12 0-1 4-3 7-7 7zM13 11h9v4l-5 2c-3 0-4-2-4-6z" fill="#1a90e0"/></svg></button>
            <button class="running active" aria-label="钢筋算量"><svg viewBox="0 0 16 16"><use href="#logo"/></svg></button>
        </div>
        <div class="task-scroll"><svg class="chev up"><use href="#chev"/></svg><svg class="chev"><use href="#chev"/></svg></div>
        <div class="tray">
            <i class="divider"></i>
            <a href="#">链接</a>
            <svg class="people" viewBox="0 0 16 16"><circle cx="6" cy="7" r="2.500"/><path d="M1.500 15c0-6 9-6 9 0"/><circle cx="11.500" cy="3" r="2.500"/><path d="M10 7c3-1 5 1 5.500 4"/></svg>
            <div class="cpu">32%<br>CPU使用</div>
            <svg class="signal" viewBox="0 0 20 16"><path d="M1 6c5-6 13-6 18 0M5 10c3-3.500 7-3.500 10 0" fill="none" stroke="#60c818" stroke-width="2.300"/><circle cx="10" cy="13.500" r="2" fill="#60c818"/></svg>
            <svg viewBox="0 0 16 16"><path d="m2 11 6-6 6 6"/></svg>
            <svg class="solid" viewBox="0 0 14 16"><use href="#bell"/></svg>
            <svg viewBox="0 0 16 16"><path d="M5 5h9v8H5zM14.500 7.500v3M1 2v3h4V2M3 5v4M2 0v2M4 0v2"/><path d="M7 7h5v4H7z" fill="#fff"/></svg>
            <svg viewBox="0 0 16 16"><path d="M2 14C2 7 7 3 13 2M5 14c0-5 3-8 8-9M8 14c0-3 2-5 5-6M11 14c0-1 1-3 2-3"/></svg>
            <svg viewBox="0 0 16 16"><path d="M1 6h3l4-4v12l-4-4H1zM10 5c2 2 2 4 0 6M12 3c3 3 3 7 0 10M14 1c4 4 4 10 0 14"/></svg>
            <svg class="keys" viewBox="0 0 24 16"><path d="M.5 1.500h23v12H.5zM5 11h14"/><path d="M3 5h18M3 8h18" stroke-dasharray="2 1"/></svg>
            <span>中</span>
            <svg class="solid"><use href="#sogou"/></svg>
            <time>12:56<br>2018/9/2</time>
            <div class="notice"><svg class="solid" viewBox="0 0 16 16"><path d="M0 0h16v12H7v4l-4-4H0z" fill="#fff"/><path d="M2 3h12M2 6h12M2 9h8" stroke="#08161a"/></svg><b>1</b></div>
        </div>
    </div>
</body>

</html>
```
FILE: styles.css
```css
* {
    box-sizing: border-box;
}

body {
    margin: 0;
    height: 100vh;
    overflow: hidden;
    display: flex;
    flex-direction: column;
    background: #f0f0f0;
    color: #000;
    font: 12px/16px "Open Sans", "Noto Sans CJK SC", sans-serif;
}

button,
input,
select {
    margin: 0;
    padding: 0;
    border: 0;
    background: none;
    color: inherit;
    font: inherit;
    white-space: nowrap;
}

ul {
    margin: 0;
    padding: 0;
    list-style: none;
}

svg {
    flex: none;
}

.sprite {
    position: absolute;
    width: 0;
    height: 0;
}

.icon {
    width: 16px;
    height: 16px;
}

.chev {
    width: 10px;
    height: 10px;
    color: #505050;
}

.chev.up {
    transform: rotate(180deg);
}

.arrow {
    border: 3px solid transparent;
    border-top-color: currentColor;
    border-bottom: 0;
}

.arrow.wide {
    margin: 0 1px;
}

.sep {
    width: 1px;
    height: 18px;
    margin: 0 2px;
    background: #b4b4b4;
}

/* Window frame */
.window {
    flex: 1;
    min-height: 0;
    display: flex;
    flex-direction: column;
}

.title-bar {
    display: flex;
    align-items: center;
    gap: 5px;
    height: 23px;
    padding-left: 2px;
    background: #fff;
    color: #999;
}

.title-bar h1 {
    flex: 1;
    margin: 0;
    font-family: Inter, "Noto Sans CJK SC", sans-serif;
    font-size: 12px;
    font-weight: normal;
    white-space: nowrap;
}

.window-buttons {
    display: flex;
    gap: 34px;
    padding-right: 20px;
}

.window-buttons svg {
    display: block;
    width: 11px;
    height: 11px;
    fill: none;
    stroke: #888;
}

.menu-bar {
    display: flex;
    align-items: center;
    gap: 12px;
    height: 31px;
    padding: 0 4px;
}

.hint {
    margin-left: auto;
    margin-right: 20px;
    color: #107070;
    text-decoration: none;
}

.account {
    display: flex;
    align-items: center;
    gap: 6px;
    height: 27px;
    padding: 0 2px 0 4px;
    background: #f8f8f8;
}

.account button {
    display: flex;
    align-items: center;
    gap: 6px;
    margin-right: 2px;
}

.account .bell {
    color: #2080f0;
}

.more {
    align-self: flex-start;
    margin-left: auto;
    font-size: 16px;
    line-height: 14px;
}

.menu-bar .more {
    margin-left: 24px;
    margin-top: 1px;
}

/* Toolbars */
.toolbar-row {
    display: flex;
    gap: 2px;
    height: 30px;
    padding-bottom: 2px;
}

.toolbar {
    display: flex;
    align-items: center;
    height: 28px;
    padding: 0 1px;
    border-radius: 3px;
    background: linear-gradient(#fafafa, #f0f0f0);
}

.toolbar button {
    display: flex;
    align-items: center;
    gap: 4px;
    padding: 0 4px 0 3px;
}

.toolbar button:disabled {
    color: #808080;
}

.file-tools {
    flex: 0 0 151px;
}

.draw-tools {
    flex: 0 0 548px;
}

.view-tools {
    flex: 1;
}

.toolbar .more {
    padding: 0;
}

.file-tools .icon {
    margin-right: 1px;
}

.toolbar .boxed {
    height: 23px;
    margin-right: 1px;
    padding-right: 2px;
    border: 1px solid #707070;
}

.swatch {
    width: 14px;
    height: 10px;
    border: 1px solid #c0c0c0;
    background: #e8e8e8;
}

.boxed .arrow {
    margin-left: 4px;
}

.combo {
    display: flex;
    align-items: center;
    background: #fff;
}

.combo select {
    flex: 1;
    min-width: 0;
    appearance: none;
}

.combo::after {
    content: "";
    margin: 0 3px;
    border: 3px solid transparent;
    border-top-color: currentColor;
    border-bottom: 0;
}

.floor {
    width: 61px;
    height: 26px;
    margin: 0 2px 0 6px;
}

/* Module navigator */
.main {
    flex: 1;
    min-height: 0;
    display: flex;
    gap: 6px;
}

.nav-panel {
    flex: 0 0 165px;
    display: flex;
    flex-direction: column;
    padding-bottom: 3px;
    font-family: "Liberation Serif", "Noto Sans CJK SC", sans-serif;
}

.panel-title {
    display: flex;
    align-items: center;
    gap: 10px;
    height: 16px;
    padding-right: 4px;
    margin-bottom: 1px;
    border: 1px solid #909090;
    border-left: 0;
}

.panel-title span {
    flex: 1;
}

.panel-title svg {
    display: block;
    width: 9px;
    height: 10px;
}

.module {
    height: 22px;
    padding-top: 1px;
    border: 1px solid #a0a0a0;
    border-top-color: #fff;
}

.expand-bar {
    display: flex;
    gap: 7px;
    height: 27px;
    padding: 6px 7px;
    background: linear-gradient(#fcfcfc, #f0f0f0);
}

.expand-bar svg {
    display: block;
    width: 16px;
    height: 14px;
}

.tree {
    flex: 1;
    min-height: 0;
    margin: 0 1px 0 2px;
    padding-top: 1px;
    border: 1px solid #808890;
    background: #fff;
}

.node,
.tree ul li {
    display: flex;
    align-items: center;
    height: 16px;
    white-space: nowrap;
}

.node {
    gap: 6px;
    padding-left: 6px;
}

.node .chev {
    margin-right: 1px;
    color: #989898;
    transform: rotate(-90deg);
}

.node .icon {
    margin-right: -1px;
}

.open > .node .chev {
    color: #303030;
    transform: none;
}

.tree ul {
    padding-left: 31px;
    background:
        repeating-linear-gradient(#909090 0 1px, #fff 1px 2px) 31px 0 / 1px calc(100% - 8px) no-repeat,
        repeating-linear-gradient(#909090 0 1px, #fff 1px 2px) 12px 0 / 1px 100% no-repeat;
}

.tree .last ul {
    background: repeating-linear-gradient(#909090 0 1px, #fff 1px 2px) 31px 0 / 1px calc(100% - 8px) no-repeat;
}

.tree ul li::before,
.list li::before {
    content: "";
    width: 11px;
    border-top: 1px dotted #808080;
}

.tree ul svg {
    width: 15px;
    height: 15px;
    margin-right: 5px;
}

.tree ul .book {
    margin: 0 1px 0 0;
}

.tree ul .current svg {
    margin-right: 0;
    background: #d8d8d8;
}

.tree ul .current span {
    padding: 0 5px;
    background: #d8d8d8;
}

.new {
    align-self: flex-start;
    background: #ffe820;
    font: bold 9px/10px "Open Sans", sans-serif;
}

/* Workspace */
.workspace {
    flex: 1;
    min-width: 0;
    display: flex;
    flex-direction: column;
}

.panes {
    flex: 1;
    min-height: 0;
    display: flex;
    gap: 4px;
}

.members {
    flex: 0 0 183px;
    display: flex;
    flex-direction: column;
    padding: 3px 0 2px;
}

.search {
    display: flex;
    align-items: center;
    gap: 5px;
    height: 27px;
    padding: 0 1px;
    background: #fff;
}

.search input {
    width: 157px;
    height: 24px;
    padding: 0 2px 2px;
    border: 1px solid #707070;
}

.search input::placeholder {
    color: #707070;
}

.search button {
    width: 16px;
    height: 16px;
    background: #e8f4fc;
}

.list-box {
    flex: 1;
    min-height: 0;
    display: flex;
    border: 1px solid #808890;
    background: #fff;
}

.list {
    flex: 1;
    margin-left: 31px;
    padding-top: 1px;
    background: repeating-linear-gradient(#909090 0 1px, #fff 1px 2px) 0 0 / 1px 537px no-repeat;
    font-family: "Liberation Serif", "Noto Sans CJK SC", serif;
}

.list li {
    display: flex;
    align-items: center;
    height: 16px;
}

.list svg {
    width: 12px;
    height: 12px;
    margin: 0 7px 0 2px;
}

.list span {
    display: flex;
    align-items: center;
    height: 16px;
    padding-right: 4px;
    margin-left: -2px;
    background: #316ac5;
}

.list span svg {
    margin-left: 4px;
}

.scrollbar {
    display: flex;
    flex-direction: column;
    align-items: center;
    width: 16px;
    margin-right: 1px;
    padding: 4px 0;
    background: #f0f0f0;
}

.track {
    flex: 1;
    align-self: stretch;
    display: flex;
    flex-direction: column;
    justify-content: flex-end;
    margin: 5px 0;
}

.thumb {
    height: 64%;
    background: #cdcdcd;
}

/* Property grid */
.properties {
    flex: 1;
    min-width: 0;
    display: flex;
    flex-direction: column;
    margin-right: 4px;
    border: 1px solid #d8d8d8;
    border-top: 0;
    background: #fff;
    font-family: "Liberation Serif", "Noto Sans CJK SC", serif;
}

.tabs {
    display: flex;
    height: 21px;
    border-bottom: 1px solid #d8d8d8;
}

.tabs button {
    height: 21px;
    padding: 0 7px;
    border-right: 1px solid #d8d8d8;
    background: #fff;
}

.grid-box {
    flex: 1;
    min-height: 0;
    margin: 3px 0 2px 3px;
    padding-top: 1px;
    border: 1px solid #a0a0a0;
}

.grid {
    border-collapse: separate;
    border-spacing: 0;
    table-layout: fixed;
    width: 370px;
}

.grid th,
.grid td {
    height: 19px;
    padding: 0 0 0 2px;
    border: 0 solid #bebebe;
    border-width: 0 1px 1px 0;
    line-height: 18px;
    font-weight: normal;
    white-space: nowrap;
}

.grid th {
    padding: 0;
    background: #f6f6f6;
}

.grid thead th {
    height: 23px;
    background: linear-gradient(#fff, #f0f0f0);
}

.no {
    width: 22px;
}

.name {
    width: 191px;
}

.grid thead .value {
    width: 126px;
    background: linear-gradient(#fbdca4, #f2c268);
    color: #600050;
}

.grid td:nth-child(2) {
    padding-left: 20px;
}

.grid .child td:nth-child(2) {
    padding-left: 30px;
    background:
        linear-gradient(#bebebe, #bebebe) 8px 0 / 1px 100% no-repeat,
        linear-gradient(#bebebe, #bebebe) 8px 9px / 17px 1px no-repeat;
}

.grid .end td:nth-child(2) {
    background-size: 1px 9px, 17px 1px;
}

.grid .group td:nth-child(2) {
    padding-left: 2px;
}

.grid .key {
    color: #0000ff;
}

.locked td,
.group td {
    color: #808080;
}

.toggle {
    width: 13px;
    height: 13px;
    margin-right: 5px;
    border: 1px solid #a8a8a8;
    color: #000;
    font-size: 14px;
    line-height: 10px;
    vertical-align: middle;
}

.grid input {
    display: block;
    width: 13px;
    height: 13px;
    margin: 0 auto;
    appearance: none;
    border: 1px solid #333;
}

.grade {
    width: 12px;
    height: 10px;
    margin: 0 1px;
    vertical-align: middle;
}

.status-bar {
    display: flex;
    gap: 2px;
    height: 21px;
    padding-top: 1px;
    font-family: "Liberation Serif", "Noto Sans CJK SC", serif;
}

.status-bar span,
.dialog-status span {
    padding: 1px;
    border: 1px solid #d8d8d8;
    background: linear-gradient(#fcfcfc, #f0f0f0);
    white-space: nowrap;
}

.blank {
    width: 148px;
}

.height {
    width: 78px;
}

.base {
    width: 98px;
}

.count {
    width: 48px;
}

.message {
    flex: 1;
    min-width: 0;
    overflow: hidden;
}

.fps {
    width: 70px;
}

/* Section editor */
.dialog {
    position: absolute;
    left: 756px;
    right: 0;
    top: 103px;
    padding: 0 0 6px 7px;
    border: 1px solid #282828;
    border-right: 0;
    background: #b9d0ea;
    box-shadow: inset 0 -1px #40c0e8;
}

.dialog h2 {
    height: 30px;
    margin: 0 0 0 -7px;
    padding: 11px 0 0 7px;
    background: linear-gradient(#99b4d1, #b9d1ea);
    font-size: 12px;
    font-weight: normal;
    line-height: 16px;
}

.dialog-body {
    background: #fff;
}

.dialog-tabs {
    display: flex;
    align-items: flex-end;
    height: 21px;
    padding-left: 1px;
    background: #f0f0f0;
    border-bottom: 1px solid #d8d8d8;
}

.dialog-tabs button {
    width: 48px;
    height: 19px;
    padding-left: 6px;
    border: 1px solid #d8d8d8;
    border-bottom: 0;
    text-align: left;
}

.dialog-tabs .active {
    width: 51px;
    height: 21px;
    background: #fff;
}

.dialog-tools {
    display: flex;
    align-items: center;
    gap: 10px;
    height: 28px;
    margin: 3px 0 0 5px;
    padding-left: 4px;
    background: linear-gradient(#fcfcfc, #f0f0f0);
}

.dialog-tools.info {
    gap: 2px;
    margin-top: 0;
    background: #f0f0f0;
    color: #707070;
}

.dialog-tools button:disabled {
    color: #808080;
}

.dialog-tools .sep {
    margin: 0 -2px;
}

.grip {
    width: 2px;
    height: 16px;
    margin-right: -4px;
    background: repeating-linear-gradient(#b0b0b0 0 2px, transparent 2px 5px);
}

.info .grip {
    margin-right: 3px;
}

.bar {
    width: 133px;
    height: 23px;
    border: 1px solid #707070;
    font-size: 12px;
}

.bar select {
    opacity: 1;
}

.canvas {
    height: 424px;
    margin: 1px 0 0 5px;
    border: 2px solid #ff0000;
    border-right: 0;
    background: #000;
}

.canvas svg {
    display: block;
    width: 100%;
    height: 100%;
    fill: none;
    stroke-width: 2;
}

.axis-lines {
    stroke: #343434;
    stroke-width: 1;
    stroke-dasharray: 12 4 3 4;
}

.axis-lines .center {
    stroke: #606060;
}

.white {
    stroke: #fff;
}

.thin {
    stroke-width: 1;
}

.green {
    stroke: #00ff00;
}

.red {
    stroke: #ff0000;
    stroke-width: 3;
}

.bars {
    stroke: #ff00ff;
    stroke-width: 1;
}

.corner {
    stroke: #ffff00;
}

.labels {
    fill: #fff;
    font: 18px "Liberation Serif", serif;
}

.origin {
    fill: #504030;
    font: 12px "Liberation Serif", serif;
}

.cjk {
    font: 300 17px "Noto Sans CJK SC", sans-serif;
}

.bar-text {
    fill: #00ff00;
    font: 15px "Liberation Mono", monospace;
}

.dialog-status {
    display: flex;
    gap: 2px;
    height: 28px;
    padding-top: 7px;
    background: linear-gradient(#fff 4px, #f0f0f0 4px);
    font-family: "Liberation Serif", "Noto Sans CJK SC", serif;
}

.dialog-status span {
    flex: 1;
}

.dialog-status span:first-child {
    flex: 0 0 147px;
}

/* Overlays */
.pen-mark {
    position: absolute;
    left: 360px;
    top: 606px;
    width: 350px;
    height: 56px;
    fill: none;
    stroke: #ff0000;
    stroke-width: 7;
}

.score-ball {
    position: absolute;
    left: 462px;
    top: -28px;
    width: 46px;
    height: 46px;
    padding-top: 27px;
    border-radius: 50%;
    background: #3cc060;
    box-shadow: 0 1px 4px #888;
    color: #fff;
    font: bold 12px/16px "Open Sans", sans-serif;
    text-align: center;
}

.net-pill {
    position: absolute;
    left: 901px;
    top: 20px;
    display: flex;
    align-items: center;
    gap: 5px;
    width: 121px;
    height: 51px;
    padding-left: 5px;
    border-radius: 26px;
    background: #fff;
    box-shadow: 0 1px 5px #999;
    color: #606060;
    font-family: Roboto, sans-serif;
}

.wifi {
    width: 40px;
    height: 40px;
}

.readings div {
    display: flex;
    align-items: center;
    gap: 4px;
    height: 20px;
}

.readings svg {
    width: 12px;
    height: 12px;
}

.ime-bar {
    position: absolute;
    left: 725px;
    top: 22px;
    display: flex;
    align-items: center;
    gap: 6px;
    width: 207px;
    height: 24px;
    background: linear-gradient(90deg, transparent 18px, #fff 18px);
    border: 1px solid #b0c4d8;
    border-left: 0;
    color: #1e78c8;
}

.ime-bar svg {
    width: 16px;
    height: 16px;
}

.ime-bar .ime-logo {
    width: 28px;
    height: 28px;
}

.ime-bar b {
    width: 16px;
    font-size: 15px;
}

/* Taskbar */
.taskbar {
    display: flex;
    height: 40px;
    background: #08161a;
    color: #fff;
}

.start {
    display: flex;
    align-items: center;
    justify-content: center;
    width: 48px;
    background: #080c0e;
}

.start svg {
    width: 16px;
    height: 16px;
}

.task-search {
    display: flex;
    align-items: center;
    gap: 9px;
    width: 344px;
    padding: 0 14px 0 9px;
    background: #f1f1f1;
    font-size: 14px;
}

.task-search input {
    flex: 1;
    min-width: 0;
}

.task-search input::placeholder {
    color: #404040;
}

.ring {
    width: 22px;
    height: 22px;
}

.mic {
    width: 12px;
    height: 16px;
}

.apps {
    display: flex;
    flex: 0 0 404px;
}

.apps button {
    display: flex;
    align-items: center;
    justify-content: center;
    width: 50px;
}

.apps button svg {
    width: 24px;
    height: 24px;
}

.apps .running {
    width: 48px;
    border-bottom: 2px solid #76b9ed;
}

.apps .running svg {
    margin-top: 2px;
}

.apps .active {
    background: #3a474b;
}

.divider {
    align-self: center;
    width: 4px;
    height: 16px;
    border: 1px solid #445055;
    border-width: 0 1px;
}

.apps .divider {
    margin: 0 12px 0 8px;
}

.task-scroll {
    display: flex;
    flex-direction: column;
    align-items: center;
    justify-content: space-between;
    width: 17px;
    padding: 4px 0;
    background: #f0f0f0;
}

.tray {
    flex: 1;
    display: flex;
    align-items: center;
    gap: 8px;
    padding: 0 16px 0 12px;
}

.tray a {
    margin-left: 2px;
    color: inherit;
    text-decoration: none;
}

.tray > svg {
    width: 16px;
    height: 16px;
    fill: none;
    stroke: #fff;
}

.tray > .people {
    margin: 0 22px 0 16px;
}

.tray > .solid {
    stroke: none;
    color: #fff;
}

.tray > .signal {
    width: 20px;
    margin-left: 14px;
}

.tray > .keys {
    width: 24px;
}

.tray span {
    margin: 0 6px 0 2px;
}

.cpu,
.tray time {
    line-height: 17px;
    text-align: center;
}

.tray time {
    margin: 0 14px 0 auto;
}

.notice {
    display: flex;
}

.notice svg {
    width: 16px;
    height: 16px;
}

.notice b {
    width: 16px;
    height: 16px;
    margin: 8px 0 0 -8px;
    border: 1px solid #888;
    border-radius: 50%;
    background: #303a3e;
    line-height: 14px;
    text-align: center;
}
```
